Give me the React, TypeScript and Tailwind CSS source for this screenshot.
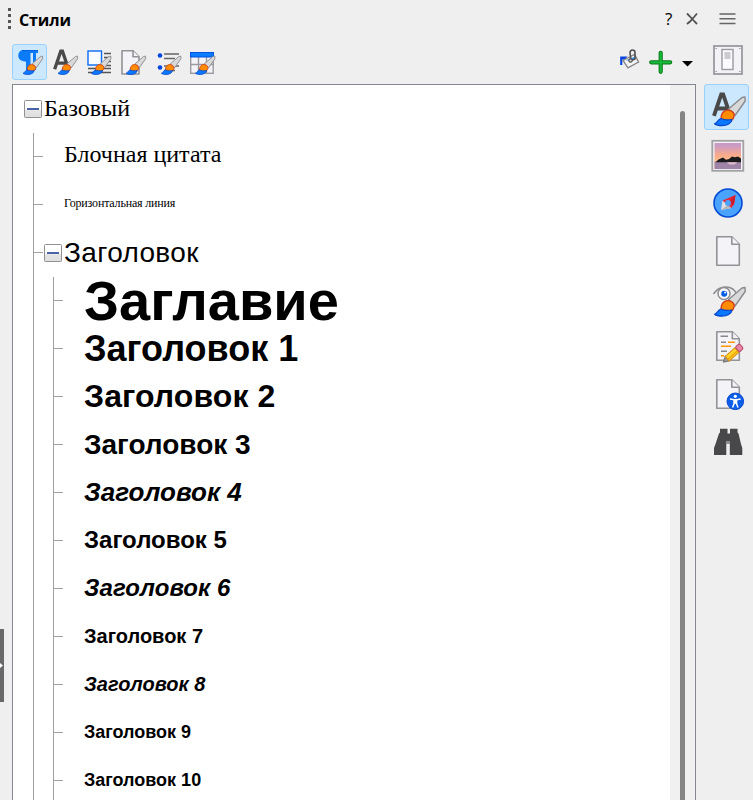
import React from "react";

type Level = 0 | 1 | 2;
interface StyleRow {
  label: string;
  level: Level;
  open?: boolean;
  cls: string;
}

const sans = "font-['Liberation_Sans',sans-serif]";
const serif = "font-['Liberation_Serif',serif]";

const rows: StyleRow[] = [
  { label: "Базовый", level: 0, open: true, cls: `${serif} text-[24px] -translate-y-px` },
  { label: "Блочная цитата", level: 1, cls: `${serif} text-[24px] -translate-y-[3px]` },
  { label: "Горизонтальная линия", level: 1, cls: `${serif} text-[12px] tracking-[-0.18px] -translate-y-0.5` },
  { label: "Заголовок", level: 1, open: true, cls: `${sans} text-[28px] tracking-[0.35px]` },
  { label: "Заглавие", level: 2, cls: `${sans} text-[56px] font-bold` },
  { label: "Заголовок 1", level: 2, cls: `${sans} text-[36px] font-bold` },
  { label: "Заголовок 2", level: 2, cls: `${sans} text-[32px] font-bold tracking-[0.08px] -translate-y-px` },
  { label: "Заголовок 3", level: 2, cls: `${sans} text-[28px] font-bold` },
  { label: "Заголовок 4", level: 2, cls: `${sans} text-[26px] font-bold italic -translate-y-px` },
  { label: "Заголовок 5", level: 2, cls: `${sans} text-[24px] font-bold -translate-y-px` },
  { label: "Заголовок 6", level: 2, cls: `${sans} text-[24px] font-bold italic tracking-[0.08px] -translate-y-px` },
  { label: "Заголовок 7", level: 2, cls: `${sans} text-[20px] font-bold -translate-y-px` },
  { label: "Заголовок 8", level: 2, cls: `${sans} text-[20px] font-bold italic -translate-y-px` },
  { label: "Заголовок 9", level: 2, cls: `${sans} text-[18px] font-bold -translate-y-px` },
  { label: "Заголовок 10", level: 2, cls: `${sans} text-[18px] font-bold -translate-y-px` },
];

function Brush({ x, y, s = 1 }: { x: number; y: number; s?: number }) {
  return (
    <g transform={`translate(${x} ${y}) scale(${s})`} strokeLinejoin="round">
      <path d="M31 1 L28 1.500 L14.500 13 L21 19.500 L31.200 5Z" fill="#d9d9da" stroke="#8a8a8e" strokeWidth="1.4" />
      <path d="M7.200 23.500 C6.500 16.500 11 13.500 15 14.200 C19 15 21 18 20 20.500 C19 24.500 15 26.500 10 26Z" fill="#ff8c00" stroke="#d0401c" strokeWidth="1.4" />
      <path d="M.5 27.800 C3.500 27 3.500 23.500 7 22.500 C10 24 14 24.300 18 23.500 C17.500 27.500 13 29.700 8 29.700 C5 29.700 2 29 .5 27.800Z" fill="#0b78ff" stroke="#0846cc" strokeWidth="1.2" />
    </g>
  );
}

function Page({ x, y, w, h, fold }: { x: number; y: number; w: number; h: number; fold: number }) {
  return (
    <g fill="#f4f4f8" stroke="#929297" strokeWidth="1.6" strokeLinejoin="round">
      <path d={`M${x} ${y}H${x + w - fold}L${x + w} ${y + fold}V${y + h}H${x}Z`} />
      <path d={`M${x + w - fold} ${y}V${y + fold}H${x + w}`} />
    </g>
  );
}

function LetterA({ x, y, s = 1 }: { x: number; y: number; s?: number }) {
  return (
    <g transform={`translate(${x} ${y}) scale(${s})`} fill="none" stroke="#494949" strokeWidth="4">
      <path d="M2 24 L9.500 2 H11.500 L19 24 M5 16.500H16" />
    </g>
  );
}

// Toolbar drawings share one coordinate system with the panel.
function ToolIcon({ x, children }: { x: number; children: React.ReactNode }) {
  return (
    <svg width="33" height="34" viewBox={`${x} 45 33 34`} className="block shrink-0">
      {children}
    </svg>
  );
}

function Tool({ active, x, children }: { active?: boolean; x: number; children: React.ReactNode }) {
  return (
    <button
      className={
        active
          ? "h-9 w-[35px] shrink-0 rounded-[3px] border border-[#99d1ff] bg-[#cce8ff]"
          : "h-9 w-[35px] shrink-0 border border-transparent"
      }
    >
      <ToolIcon x={x}>{children}</ToolIcon>
    </button>
  );
}

function Toolbar() {
  return (
    <div className="flex h-11 pl-2 pt-1">
      <Tool active x={13}>
        <path d="M24 50H38V53H36V70H33V53H30.500V70H26V61.500C21 61.500 18.300 59 18.300 55.700C18.300 52 20.500 50 24 50Z" fill="#0b7bf8" />
        <path d="M22 50.500H38" stroke="#0560dc" strokeWidth="1" fill="none" />
        <Brush x={22.700} y={55.500} s={0.64} />
      </Tool>
      <Tool x={48}>
        <LetterA x={53} y={49.500} s={0.82} />
        <Brush x={57.700} y={55.500} s={0.64} />
      </Tool>
      <Tool x={83}>
        <path d="M104 53.500H111M104 57.500H111M104 61.500H111M104 65.500H111M88 68.500H111M88 72.500H111" stroke="#555" strokeWidth="1.4" />
        <rect x="88" y="51" width="13.500" height="14" fill="#f8fbff" stroke="#0b6cf5" strokeWidth="1.400" />
        <Brush x={91} y={55.500} s={0.64} />
      </Tool>
      <Tool x={118}>
        <Page x={122} y={50.700} w={17} h={23.300} fold={6} />
        <Brush x={125.700} y={55.500} s={0.64} />
      </Tool>
      <Tool x={153}>
        <path d="M164 54H179M164 58.500H175M164 66H179M164 70.500H175" stroke="#666" strokeWidth="1.600" />
        <circle cx="160" cy="55.500" r="2.300" fill="#0646e0" />
        <circle cx="160" cy="67.500" r="2.300" fill="#0646e0" />
        <Brush x={161} y={55.500} s={0.64} />
      </Tool>
      <Tool x={188}>
        <rect x="190.700" y="52.700" width="22.500" height="20.600" fill="#f4f4f8" stroke="#9a9aa0" strokeWidth="1.400" />
        <path d="M190 64.500H214M198.500 56V74M206.500 56V74" stroke="#9a9aa0" strokeWidth="1.400" />
        <rect x="190.500" y="52.500" width="23" height="4.500" fill="#0b7bff" stroke="#0650df" />
        <Brush x={195} y={55.500} s={0.64} />
      </Tool>
      <div className="ml-auto flex">
        <ToolIcon x={612}>
          <path d="M620.200 66V57.500H627.500L625 60.500H622.300V66Z" fill="#0743dd" />
          <path d="M623 61.500L634.500 55.500L638.500 63L628 68.800Z" fill="#f5f5f5" stroke="#85858a" strokeWidth="1.400" />
          <path d="M625.500 61.500L635.500 57.500L634 61Z" fill="#1e90ff" />
          <path d="M631 61L630 54Q630 51 632.500 51Q635 51 635 53.500V60L631.500 61.500" fill="none" stroke="#505054" strokeWidth="1.600" />
          <circle cx="630.500" cy="61.500" r="1.700" fill="#ddd" stroke="#505054" strokeWidth="1.200" />
        </ToolIcon>
        <ToolIcon x={645}>
          <path d="M660.700 53.800V72.800M651.200 63.300H670.200" stroke="#087a18" strokeWidth="4.200" strokeLinecap="round" />
          <path d="M660.700 53.800V72.800M651.200 63.300H670.200" stroke="#18b83b" strokeWidth="2.200" strokeLinecap="round" />
        </ToolIcon>
        <svg width="18" height="34" viewBox="678 45 18 34">
          <path d="M682 62H693L687.500 67.500Z" fill="#000" />
        </svg>
      </div>
    </div>
  );
}

function Toggle() {
  return (
    <svg width="18" height="18" viewBox="0 0 18 18" className="shrink-0">
      <defs>
        <linearGradient id="box" x2="0" y2="1">
          <stop offset=".5" stopColor="#fff" />
          <stop offset=".6" stopColor="#e4e4e4" />
          <stop offset="1" stopColor="#dedede" />
        </linearGradient>
      </defs>
      <rect x=".5" y=".5" width="17" height="17" rx=".8" fill="url(#box)" stroke="#929292" />
      <rect x="3" y="8" width="12" height="2" fill="#4b63a7" />
    </svg>
  );
}

function TreeRow({ row }: { row: StyleRow }) {
  const { level, open } = row;
  return (
    <div className="flex h-12 shrink-0 items-center">
      {level === 0 && <div className="w-[11px] shrink-0" />}
      {level > 0 && (
        <div className="flex h-full w-[31px] shrink-0 items-center pl-5">
          <div className={row.label === "Заголовок" || level === 1 ? "h-full w-px shrink-0 bg-[#a0a0a0]" : "h-full w-px bg-[#a0a0a0]"} />
          {level === 1 && <div className="-mt-px h-px w-[9px] shrink-0 bg-[#a0a0a0]" />}
        </div>
      )}
      {level === 1 && !open && <div className="w-5 shrink-0" />}
      {level === 2 && (
        <div className="flex h-full w-10 shrink-0 items-center pl-[9px]">
          <div className="h-full w-px shrink-0 bg-[#a0a0a0]" />
          <div className="-mt-px h-px w-[9px] shrink-0 bg-[#a0a0a0]" />
        </div>
      )}
      {open && (
        <div className="flex w-5 shrink-0">
          <Toggle />
        </div>
      )}
      <span className={`${row.cls} whitespace-nowrap leading-none`}>{row.label}</span>
    </div>
  );
}

function TabButton({ active, y, children }: { active?: boolean; y: number; children: React.ReactNode }) {
  return (
    <button
      className={
        active
          ? "h-[46px] w-[45px] rounded-[3px] border border-[#99d1ff] bg-[#cce8ff]"
          : "h-[46px] w-[45px] border border-transparent"
      }
    >
      <svg width="43" height="44" viewBox={`705 ${y} 43 44`} className="block">
        {children}
      </svg>
    </button>
  );
}

function TabBar() {
  return (
    <div className="flex w-[49px] shrink-0 flex-col gap-0.5">
      <TabButton y={37}>
        <rect x="714" y="46" width="28" height="28" fill="#f2f2f7" stroke="#9a9a9f" strokeWidth="1.800" />
        <rect x="722" y="49.500" width="11" height="20" fill="#fafaff" stroke="#9a9a9f" strokeWidth="1.400" />
        <rect x="724.500" y="52" width="6" height="7" fill="#ccccd0" />
        <path d="M715.500 48.500h1.500M739 48.500h1.500M715.500 71.500h1.500M739 71.500h1.500" stroke="#999" />
      </TabButton>
      <TabButton active y={85}>
        <LetterA x={712} y={92.500} s={0.97} />
        <Brush x={714} y={96} />
      </TabButton>
      <TabButton y={133}>
        <defs>
          <linearGradient id="dusk" x2="0" y2="1">
            <stop offset=".1" stopColor="#c99bc4" />
            <stop offset=".45" stopColor="#f8a98c" />
            <stop offset=".7" stopColor="#ffbd86" />
          </linearGradient>
        </defs>
        <rect x="712.300" y="140.800" width="31" height="30" fill="#f4f4f8" stroke="#a2a2a4" strokeWidth="1.800" />
        <rect x="714.500" y="143" width="26.500" height="26" fill="url(#dusk)" />
        <rect x="714.500" y="161.500" width="26.500" height="7.500" fill="#a084a8" />
        <path d="M715.500 162.200L718.500 159.500L723 157.500L726 159.800L729 159L732 156.500L735 157.200L738 156.500L741 158.500V162.200Z" fill="#1b1b1e" />
        <path d="M727 162.200H737Q736 164.500 732 164.500Q728 164.500 727 162.200Z" fill="#dfbcc9" />
      </TabButton>
      <TabButton y={181}>
        <circle cx="728" cy="203" r="14" fill="#4aa3ff" stroke="#064bd6" strokeWidth="1.600" />
        <path d="M721 210L722.500 200.500L731.500 208Z" fill="#dedee0" />
        <path d="M721 210L731.500 208L728 205Z" fill="#b5b5b8" />
        <path d="M735.500 195L722.500 200.500L731.500 208L734.500 203Z" fill="#e62536" />
        <path d="M735.500 195L729 202L733.500 205.500Z" fill="#cc1c30" />
        <circle cx="728" cy="203" r="2.900" fill="#4aa3ff" />
      </TabButton>
      <TabButton y={229}>
        <Page x={716.800} y={236.800} w={22.500} h={28.500} fold={7.500} />
      </TabButton>
      <TabButton y={277}>
        <path d="M713.500 294C719 285 733 284 737 295" fill="none" stroke="#8d8d92" strokeWidth="1.500" />
        <circle cx="724" cy="293.500" r="6" fill="#fafafc" stroke="#8d8d92" strokeWidth="1.500" />
        <circle cx="724.200" cy="293.800" r="3" fill="#075ee5" />
        <circle cx="725.200" cy="292.500" r="1" fill="#fff" />
        <Brush x={714} y={286.500} />
      </TabButton>
      <TabButton y={325}>
        <Page x={716.800} y={331.800} w={22.500} h={28.500} fold={7} />
        <path d="M720.500 336.300H728M721 342.300H726M721 351.300H727" stroke="#888" strokeWidth="1.400" />
        <path d="M728 342.300H735M721 346.300H731M721 355.800H724" stroke="#ff9500" strokeWidth="1.400" />
        <g transform="translate(723.500 362) rotate(-42)" strokeWidth="1.100">
          <path d="M0 0L5 -3V3Z" fill="#9c9c9c" stroke="#777" />
          <path d="M5 -3H18V3H5Z" fill="#ffd52e" stroke="#d9921a" />
          <path d="M5 1H18" stroke="#f7a800" strokeWidth="1.500" />
          <rect x="18.500" y="-3.200" width="5.500" height="6.400" rx="1.500" fill="#e986a3" stroke="#b84e70" />
        </g>
      </TabButton>
      <TabButton y={373}>
        <Page x={716.800} y={379.800} w={22.500} h={28.500} fold={7.500} />
        <circle cx="735.300" cy="401.300" r="8.300" fill="#0c5ee8" stroke="#0a48cf" />
        <circle cx="735.300" cy="396.300" r="1.600" fill="#fff" />
        <path d="M730 399L734 399.700H736.600L740.600 399M735.300 399.500V403.500M734.500 402.500L732.600 407.500M736.100 402.500L738 407.500" fill="none" stroke="#fff" strokeWidth="1.500" />
        <path d="M733.300 399H737.300V403.500H733.300Z" fill="#fff" />
      </TabButton>
      <TabButton y={421}>
        <path d="M720 428.800H727.500V433.500H730V428.800H737.500V432.500L738.500 433.500L741 444L742.300 448V455H729.800V441.500H726.300V455H714V448L715.500 444L719 433.500L720 432.500Z" fill="#48484b" />
        <path d="M726.300 441.500H729.800V444H726.300Z" fill="#8c8c8f" />
      </TabButton>
    </div>
  );
}

function Header() {
  return (
    <header className="flex h-9 shrink-0 items-start">
      <svg width="15" height="36" viewBox="4 0 15 36">
        <path d="M8 9.500H11M8 15.500H11M8 21.500H11M8 27.500H11" stroke="#555" strokeWidth="3" />
      </svg>
      <h1 className="mt-2 font-['Open_Sans',sans-serif] text-[16px] font-bold leading-6 tracking-[-0.1px] text-black">Стили</h1>
      <div className="ml-auto flex">
        <span className="mt-[7px] w-[21px] font-['Open_Sans',sans-serif] text-[17px] leading-6 text-black">?</span>
        <svg width="67" height="36" viewBox="686 0 67 36" fill="none">
          <path d="M687 13.500L690 16.500L694.500 21.500L697 24M697 13.500L694.500 16.500L690 21.500L687 24" stroke="#505050" strokeWidth="1.800" />
          <path d="M719.500 14H735.500M719.500 18.800H735.500M719.500 23.500H735.500" stroke="#666" strokeWidth="1.600" />
        </svg>
      </div>
    </header>
  );
}

export default function App() {
  return (
    <div className="flex h-[800px] w-[753px] overflow-hidden bg-[#efefef] text-black">
      <div className="w-1 shrink-0 pt-[629px]">
        <div className="flex h-[73px] items-center bg-[#696969]">
          <svg width="4" height="7" viewBox="0 0 4 7">
            <path d="M0 1L3 3.500L0 6Z" fill="#fff" />
          </svg>
        </div>
      </div>
      <div className="flex min-w-0 flex-1 flex-col">
        <Header />
        <div className="flex h-[764px]">
          <main className="flex w-[692px] shrink-0 flex-col">
            <div className="h-1 shrink-0" />
            <Toolbar />
            <div className="ml-2 flex h-[716px] border border-b-0 border-[#828790] bg-white">
              <div className="flex min-w-0 flex-1 flex-col overflow-hidden">
                {rows.map((row) => (
                  <TreeRow key={row.label} row={row} />
                ))}
              </div>
              <div className="flex w-[25px] shrink-0 bg-[#f0f0f0] pl-2.5 pt-[26px]">
                <div className="w-[5px] rounded-t-full bg-[#858585]" />
              </div>
            </div>
          </main>
          <div className="w-2 shrink-0" />
          <TabBar />
        </div>
      </div>
    </div>
  );
}
